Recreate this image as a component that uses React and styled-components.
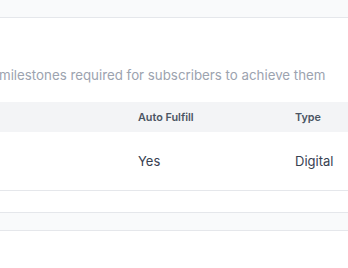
import React from "react";
import styled, { createGlobalStyle } from "styled-components";

const GlobalStyle = createGlobalStyle`
  html, body {
    margin: 0;
    padding: 0;
    background: #ffffff;
    font-family: Inter, "Noto Sans", sans-serif;
    overflow: hidden;
  }
`;

const Page = styled.div`
  width: 348px;
  height: 268px;
  display: flex;
  flex-direction: column;
  overflow: hidden;
`;

const TopBar = styled.div`
  height: 17px;
  background: #f9fafb;
  border-bottom: 1px solid #e5e7eb;
`;

const Description = styled.p`
  margin: 47px 0 0 0;
  font-size: 13.3px;
  line-height: 20px;
  color: #9ca3af;
  white-space: nowrap;
  text-indent: -1px;
`;

const Table = styled.div`
  margin-top: 17px;
  display: flex;
  flex-direction: column;
`;

const Row = styled.div`
  display: grid;
  grid-template-columns: 138px 157px 1fr;
  align-items: center;
  height: ${(p) => (p.$head ? "30px" : "58px")};
  background: ${(p) => (p.$head ? "#f3f4f6" : "#ffffff")};
  border-bottom: ${(p) => (p.$head ? "none" : "1px solid #e5e7eb")};
`;

const HeadCell = styled.div`
  font-size: 10.8px;
  font-weight: 600;
  color: #4b5563;
  white-space: nowrap;
`;

const Cell = styled.div`
  font-size: 13px;
  color: #374151;
  white-space: nowrap;
`;

const Footer = styled.div`
  margin-top: 21px;
  height: 17px;
  background: #f9fafb;
  border-top: 1px solid #e5e7eb;
  border-bottom: 1px solid #e5e7eb;
`;

export default function App() {
  return (
    <Page>
      <GlobalStyle />
      <TopBar />
      <Description>milestones required for subscribers to achieve them</Description>
      <Table>
        <Row $head>
          <HeadCell />
          <HeadCell>Auto Fulfill</HeadCell>
          <HeadCell>Type</HeadCell>
        </Row>
        <Row>
          <Cell />
          <Cell>Yes</Cell>
          <Cell>Digital</Cell>
        </Row>
      </Table>
      <Footer />
    </Page>
  );
}
